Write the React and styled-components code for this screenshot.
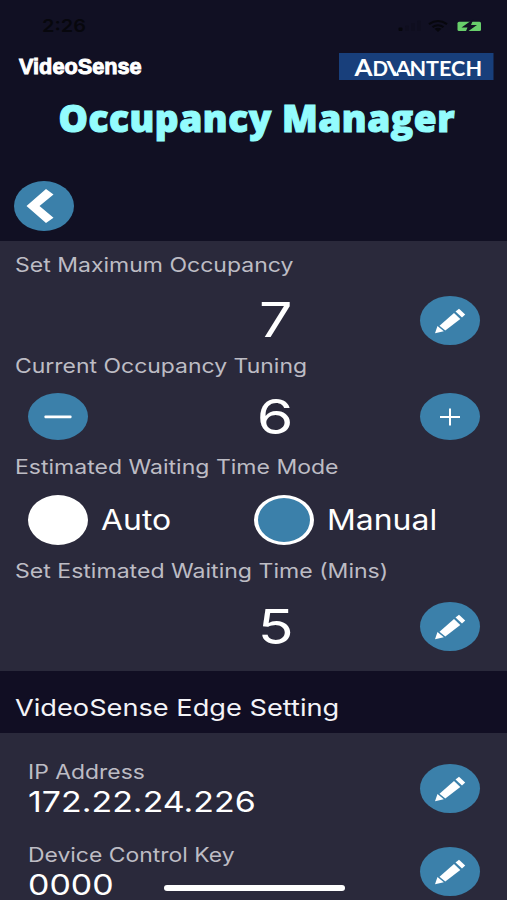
import React, { useState } from "react";
import styled, { createGlobalStyle } from "styled-components";

const GlobalStyle = createGlobalStyle`
  * {
    box-sizing: border-box;
  }
  body {
    margin: 0;
    background: #2a293b;
    font-family: Inter, "Liberation Sans", sans-serif;
  }
`;

const Screen = styled.div`
  width: 507px;
  height: 900px;
  overflow: hidden;
  position: relative;
  background: #2a293b;
`;
const Header = styled.header`
  height: 241px;
  background: #111023;
`;
const StatusBar = styled.div`
  height: 52px;
  padding: 0 25px 0 41.5px;
  display: flex;
  justify-content: space-between;
  align-items: center;
`;
const BrandRow = styled.div`
  height: 28px;
  padding: 0 13.5px 0 18.5px;
  display: flex;
  justify-content: space-between;
  align-items: center;
`;

/* wide text: every label is stretched a little from its left edge */
const Text = styled.span`
  display: block;
  white-space: nowrap;
  font-size: ${(p) => p.$size}px;
  font-weight: ${(p) => p.$weight || 400};
  line-height: ${(p) => p.$line}px;
  color: ${(p) => p.$color || "#fff"};
  transform: scaleX(${(p) => p.$stretch || 1.18});
  transform-origin: ${(p) => p.$origin || "left"} center;
`;
const VideoSenseLogo = styled.span`
  padding-top: 2px;
  font-family: "Liberation Sans", Arial, sans-serif;
  font-size: 22.5px;
  font-weight: 700;
  line-height: 28px;
  color: #fff;
  -webkit-text-stroke: 1px #fff;
  transform: scaleX(0.965);
  transform-origin: left center;
`;
const Title = styled.h1`
  margin: 0;
  padding-left: 58.5px;
  height: 78px;
  font-family: "Open Sans", sans-serif;
  font-size: 37px;
  font-weight: 800;
  line-height: 76px;
  letter-spacing: 0.55px;
  white-space: nowrap;
  color: #93fcfd;
  -webkit-text-stroke: 1.1px #93fcfd;
`;
const BackRow = styled.div`
  padding: 23px 0 0 14px;
`;

const RoundButton = styled.button`
  flex: none;
  width: 60px;
  height: ${(p) => p.$height || 49}px;
  padding: 0;
  border: 0;
  border-radius: 50%;
  background: #3b80aa;
  display: flex;
  justify-content: center;
  align-items: center;
`;

const Panel = styled.section`
  height: 430px;
  padding-top: 10px;
`;
const Label = styled.div`
  padding-left: 14.5px;
  height: 28px;
  display: flex;
  align-items: center;
`;
const ValueRow = styled.div`
  height: 73px;
  padding: ${(p) => p.$top || 0}px 27px 0 28px;
  display: grid;
  grid-template-columns: 60px 1fr 60px;
  align-items: center;
  justify-items: center;
`;
const ValueCell = styled.div`
  grid-column: 2;
  padding-left: 43px;
`;
const ActionCell = styled.div`
  grid-column: 3;
`;
const ModeRow = styled.div`
  height: 76px;
  padding: 1px 0 0 28px;
  display: grid;
  grid-template-columns: 226px 1fr;
  align-items: center;
`;
const Option = styled.label`
  display: flex;
  align-items: center;
  gap: 13px;
`;
const Radio = styled.span`
  width: 60px;
  height: 50px;
  border: solid #fff;
  border-width: 3px 4px;
  border-radius: 50%;
  background: ${(p) => (p.$checked ? "#3b80aa" : "#fff")};
`;

const SectionTitle = styled.div`
  height: 62px;
  padding: 12px 0 0 14.5px;
  display: flex;
  align-items: center;
  background: #110e23;
`;
const DeviceList = styled.div`
  padding: 25px 27px 0 28px;
  display: grid;
  grid-auto-rows: 83px;
`;
const DeviceRow = styled.div`
  display: flex;
  justify-content: space-between;
  align-items: flex-start;
`;
const DeviceButton = styled.div`
  padding-top: 6px;
`;
const HomeIndicator = styled.div`
  position: absolute;
  left: 163.5px;
  bottom: 9px;
  width: 181px;
  height: 6px;
  border-radius: 3px;
  background: #fff;
`;

const labelColor = "#bdbcc4";

const StatusIcons = () => (
  <svg width="90" height="16" viewBox="392 18 90 16">
    <rect x="398.500" y="27.500" width="4" height="3.500" rx="1" fill="#07070d" />
    <rect x="405" y="25.500" width="4" height="5.500" rx="1" fill="#0f0e1f" />
    <rect x="411" y="23" width="4" height="8" rx="1" fill="#0f0e1f" />
    <rect x="417" y="20.500" width="4" height="10.500" rx="1" fill="#0f0e1f" />
    <g fill="none" stroke="#07070d" strokeWidth="2.200">
      <path d="M429 24.200Q438 17.800 447 24.200" />
      <path d="M432.500 27.200Q438 23.300 443.500 27.200" />
    </g>
    <path d="M434.500 28.800Q438 26.500 441.500 28.800L438 32Z" fill="#07070d" />
    <rect x="457.500" y="21.700" width="23.500" height="9.300" rx="1.500" fill="#68cf6b" />
    <path d="M473.500 19L461.500 27.500H467.500L465 33.500L477 25H471Z" fill="#111023" />
  </svg>
);

const AdvantechLogo = () => (
  <svg width="154.500" height="27" viewBox="0 0 154.500 27">
    <rect width="154.500" height="27" fill="#183f7b" />
    <g fill="#fff" fontFamily="Lato, sans-serif" fontWeight="700" fontSize="20">
      <text x="15.500" y="22.500" fontSize="22.500" textLength="18" lengthAdjust="spacingAndGlyphs">A</text>
      <text x="33.500" y="22.500" textLength="15.500" lengthAdjust="spacingAndGlyphs">D</text>
      <text x="47.500" y="22.500" textLength="17" lengthAdjust="spacingAndGlyphs">V</text>
      {/* the V keeps its left stroke only */}
      <path d="M51.500 6H67V24H59Z" fill="#183f7b" />
      <text x="56.500" y="22.500" textLength="15.500" lengthAdjust="spacingAndGlyphs">A</text>
      {/* and the second A has no left foot */}
      <path d="M58.800 19.300H64V24H61Z" fill="#183f7b" />
      <text x="70.500" y="22.500" textLength="72.500" lengthAdjust="spacingAndGlyphs">NTECH</text>
    </g>
  </svg>
);

const BackIcon = () => (
  <svg width="60" height="50" viewBox="0 0 60 50">
    <path d="M32 8L39.500 13.500L25.500 25L39.500 36.700L32 42L12.500 25Z" fill="#fff" />
  </svg>
);

const PencilIcon = () => (
  <svg width="60" height="49" viewBox="0 0 60 49" fill="#fff">
    <path d="M15 37.300L17.500 30L23.800 35.200Z" />
    <path d="M19.500 29.700L34 17L40.300 22.900L25.300 34.500Z" />
    <path d="M35.500 15.500L39 12.700L45.200 18.500L42 21.500Z" />
  </svg>
);

const PlusIcon = () => (
  <svg width="22" height="18" viewBox="0 0 22 18">
    <path d="M1 9H21M11 0.500V17.500" stroke="#fff" strokeWidth="2" />
  </svg>
);

const MinusIcon = () => (
  <svg width="28" height="4" viewBox="0 0 28 4">
    <rect x="0.500" y="0.500" width="27" height="2.800" rx="0.800" fill="#fff" />
  </svg>
);

const EditButton = () => (
  <RoundButton>
    <PencilIcon />
  </RoundButton>
);

const FieldLabel = ({ text, stretch }) => (
  <Label>
    <Text $size={19.5} $line={28} $color={labelColor} $stretch={stretch}>
      {text}
    </Text>
  </Label>
);

const Value = ({ children }) => (
  <ValueCell>
    <Text $size={48.5} $line={50} $stretch={1.22} $origin="center">
      {children}
    </Text>
  </ValueCell>
);

const devices = [
  { label: "IP Address", value: "172.22.24.226", stretch: 1.17 },
  { label: "Device Control Key", value: "0000", stretch: 1.17 },
];

const App = () => {
  const [current, setCurrent] = useState(6);
  const [mode, setMode] = useState("manual");

  return (
    <Screen>
      <GlobalStyle />
      <Header>
        <StatusBar>
          <Text $size={17.5} $line={20} $weight={600} $color="#07070d" $stretch={1.14}>
            2:26
          </Text>
          <StatusIcons />
        </StatusBar>
        <BrandRow>
          <VideoSenseLogo>VideoSense</VideoSenseLogo>
          <AdvantechLogo />
        </BrandRow>
        <Title>Occupancy Manager</Title>
        <BackRow>
          <RoundButton $height={50}>
            <BackIcon />
          </RoundButton>
        </BackRow>
      </Header>

      <Panel>
        <FieldLabel text="Set Maximum Occupancy" stretch={1.18} />
        <ValueRow $top={9}>
          <Value>7</Value>
          <ActionCell>
            <EditButton />
          </ActionCell>
        </ValueRow>
        <FieldLabel text="Current Occupancy Tuning" stretch={1.177} />
        <ValueRow>
          <RoundButton $height={47} onClick={() => setCurrent(current - 1)}>
            <MinusIcon />
          </RoundButton>
          <Value>{current}</Value>
          <RoundButton $height={47} onClick={() => setCurrent(current + 1)}>
            <PlusIcon />
          </RoundButton>
        </ValueRow>
        <FieldLabel text="Estimated Waiting Time Mode" stretch={1.181} />
        <ModeRow>
          <Option onClick={() => setMode("auto")}>
            <Radio $checked={mode === "auto"} />
            <Text $size={28} $line={34} $stretch={1.14}>
              Auto
            </Text>
          </Option>
          <Option onClick={() => setMode("manual")}>
            <Radio $checked={mode === "manual"} />
            <Text $size={28} $line={34} $stretch={1.14}>
              Manual
            </Text>
          </Option>
        </ModeRow>
        <FieldLabel text="Set Estimated Waiting Time (Mins)" stretch={1.183} />
        <ValueRow $top={10}>
          <Value>5</Value>
          <ActionCell>
            <EditButton />
          </ActionCell>
        </ValueRow>
      </Panel>

      <SectionTitle>
        <Text $size={23.5} $line={30} $color="#f4f4f8" $stretch={1.157}>
          VideoSense Edge Setting
        </Text>
      </SectionTitle>
      <DeviceList>
        {devices.map((device) => (
          <DeviceRow key={device.label}>
            <div>
              <Text $size={19.5} $line={28} $color={labelColor} $stretch={1.175}>
                {device.label}
              </Text>
              <Text $size={29} $line={31} $stretch={device.stretch}>
                {device.value}
              </Text>
            </div>
            <DeviceButton>
              <EditButton />
            </DeviceButton>
          </DeviceRow>
        ))}
      </DeviceList>
      <HomeIndicator />
    </Screen>
  );
};

export default App;
